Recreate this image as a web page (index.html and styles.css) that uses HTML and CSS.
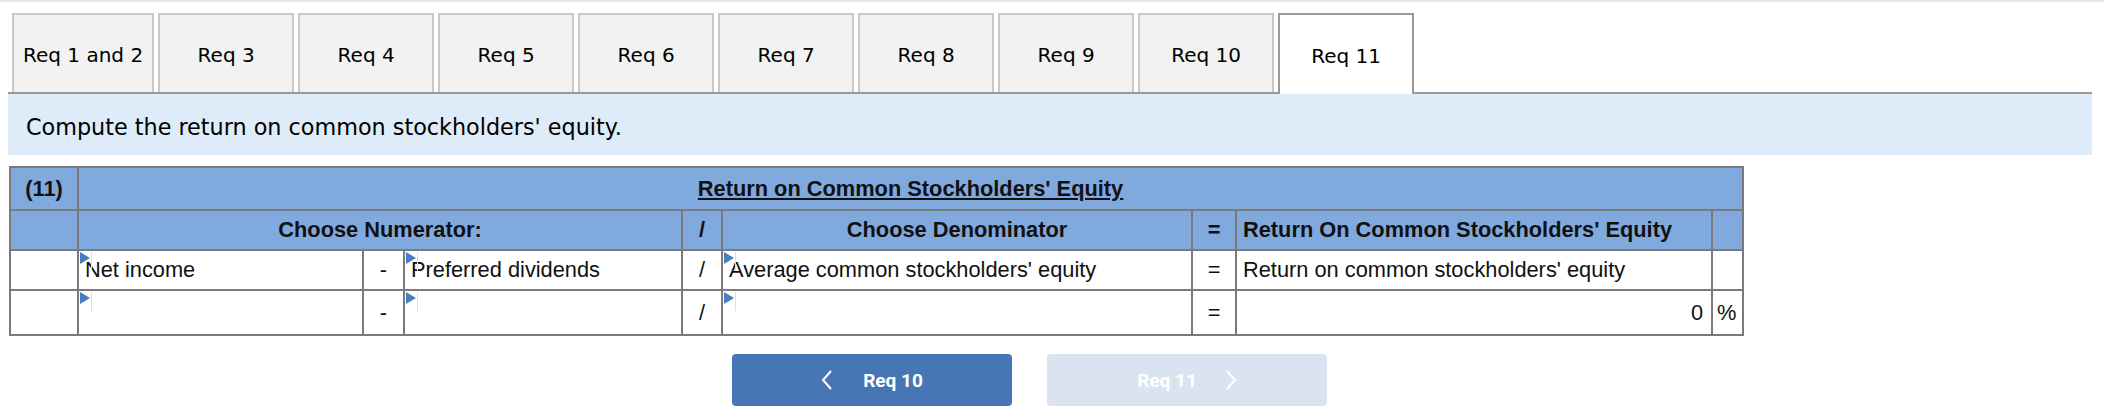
FILE: index.html
```html
<!DOCTYPE html>
<html>
<head>
<meta charset="utf-8">
<link rel="stylesheet" href="styles.css">
</head>
<body>
<div class="topline"></div>
<div class="tabs">
  <div class="tab">Req 1 and 2</div>
  <div class="tab">Req 3</div>
  <div class="tab">Req 4</div>
  <div class="tab">Req 5</div>
  <div class="tab">Req 6</div>
  <div class="tab">Req 7</div>
  <div class="tab">Req 8</div>
  <div class="tab">Req 9</div>
  <div class="tab">Req 10</div>
  <div class="tab active">Req 11</div>
</div>
<div class="prompt">Compute the return on common stockholders' equity.</div>
<table class="grid">
  <colgroup>
    <col class="c1"><col class="c2"><col class="c3"><col class="c4"><col class="c5"><col class="c6"><col class="c7"><col class="c8"><col class="c9">
  </colgroup>
  <tr class="hdr r1">
    <td class="center">(11)</td>
    <td class="center" colspan="8"><span class="title">Return on Common Stockholders' Equity</span></td>
  </tr>
  <tr class="hdr r2">
    <td></td>
    <td class="center" colspan="3">Choose Numerator:</td>
    <td class="center">/</td>
    <td class="center">Choose Denominator</td>
    <td class="center">=</td>
    <td class="left">Return On Common Stockholders' Equity</td>
    <td></td>
  </tr>
  <tr class="data r3">
    <td></td>
    <td class="input"><span class="flag"></span>Net income</td>
    <td class="center">-</td>
    <td class="input"><span class="flag"></span>Preferred dividends</td>
    <td class="center">/</td>
    <td class="input"><span class="flag"></span>Average common stockholders' equity</td>
    <td class="center">=</td>
    <td class="left">Return on common stockholders' equity</td>
    <td></td>
  </tr>
  <tr class="data r4">
    <td></td>
    <td class="input"><span class="flag"></span></td>
    <td class="center">-</td>
    <td class="input"><span class="flag"></span></td>
    <td class="center">/</td>
    <td class="input"><span class="flag"></span></td>
    <td class="center">=</td>
    <td class="num">0</td>
    <td class="pct">%</td>
  </tr>
</table>
<div class="nav">
  <button class="btn prev"><svg class="chev" width="12" height="22" viewBox="0 0 12 22"><polyline points="10,2 2,11 10,20" fill="none" stroke="#fff" stroke-width="2"/></svg><span>Req 10</span></button>
  <button class="btn next"><span>Req 11</span><svg class="chev" width="12" height="22" viewBox="0 0 12 22"><polyline points="2,2 10,11 2,20" fill="none" stroke="#fff" stroke-width="2"/></svg></button>
</div>
</body>
</html>
```
FILE: styles.css
```css
body {
  margin: 0;
  background: #fff;
}
.topline {
  height: 2px;
  background: #e8e8e8;
}
.tabs {
  display: flex;
  align-items: flex-end;
  gap: 4px;
  height: 79px;
  margin: 11px 12px 0 8px;
  padding-left: 4px;
  border-bottom: 2px solid #999;
}
.tab {
  box-sizing: border-box;
  height: 79px;
  min-width: 136px;
  padding: 2px 9px 0;
  border: 2px solid #c8c8c8;
  border-bottom: none;
  background: #f2f2f2;
  display: flex;
  align-items: center;
  justify-content: center;
  font: 20px "DejaVu Sans", Verdana, sans-serif;
  color: #000;
}
.tab.active {
  background: #fff;
  border-color: #999;
  height: 81px;
  margin-bottom: -2px;
}
.prompt {
  box-sizing: border-box;
  height: 61px;
  margin: 0 12px 0 8px;
  padding: 4px 0 0 18px;
  background: #ddecf8;
  display: flex;
  align-items: center;
  font: 22.3px "DejaVu Sans", Verdana, sans-serif;
  color: #000;
}
.grid {
  margin: 11px 0 0 9px;
  border-collapse: collapse;
  table-layout: fixed;
  width: 1735px;
  font: 21.8px "Liberation Sans", Arial, sans-serif;
  color: #111;
}
.c1 { width: 68px; }
.c2 { width: 285px; }
.c3 { width: 41px; }
.c4 { width: 278px; }
.c5 { width: 40px; }
.c6 { width: 470px; }
.c7 { width: 44px; }
.c8 { width: 476px; }
.c9 { width: 31px; }
.grid td {
  border: 2px solid #7a7a7a;
  padding: 0 6px;
  white-space: nowrap;
}
.hdr td {
  background: #80a9de;
  font-weight: bold;
}
.r1 { height: 43px; }
.r2 { height: 40px; }
.r3 { height: 40px; }
.r4 { height: 45px; }
.center { text-align: center; }
.left { text-align: left; }
.title { text-decoration: underline; }
.grid td.input {
  position: relative;
  padding-left: 6px;
}
.flag {
  position: absolute;
  left: 1px;
  top: 1px;
  width: 0;
  height: 0;
  border-left: 10px solid #4a7cc0;
  border-top: 6px solid transparent;
  border-bottom: 6px solid transparent;
}
.flag::after {
  content: "";
  position: absolute;
  left: 1px;
  top: -6px;
  width: 1px;
  height: 19px;
  background: #d6e0ec;
}
.grid td.num {
  text-align: right;
  padding-right: 8px;
}
.grid td.pct {
  padding: 0 4px;
  text-align: left;
}
.nav {
  display: flex;
  gap: 35px;
  margin: 18px 0 0 732px;
}
.btn {
  width: 280px;
  height: 52px;
  border: none;
  border-radius: 4px;
  display: flex;
  align-items: center;
  justify-content: center;
  gap: 30px;
  font: bold 19px Roboto, "Liberation Sans", sans-serif;
  color: #fff;
  padding: 0;
}
.prev { background: #4676b4; }
.next { background: #dae4f0; gap: 28px; }
.chev { display: block; }
```
